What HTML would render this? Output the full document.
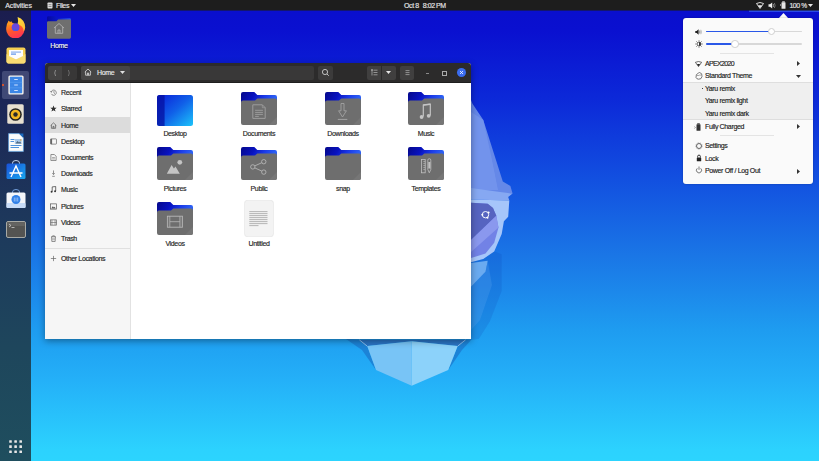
<!DOCTYPE html>
<html><head><meta charset="utf-8">
<style>
*{margin:0;padding:0;box-sizing:border-box}
html,body{width:819px;height:461px;overflow:hidden}
body{position:relative;font-family:"Liberation Sans",sans-serif;font-size:7px;letter-spacing:-0.35px;-webkit-text-stroke:0.15px currentColor;
background:linear-gradient(180deg,#0a0ecc 0%,#0a10d0 6.5%,#0c28d8 21%,#1250e0 39%,#1a76e6 55.5%,#1e9cf0 71.6%,#24b0f8 82.4%,#2cd2fe 97.6%,#2cd4fe 100%)}
.abs{position:absolute}
#wall{position:absolute;left:0;top:0}
#topbar{position:absolute;left:0;top:0;width:819px;height:10px;background:#1d1d1d;color:#e6e6e6}
#topbar span{position:absolute;top:0;line-height:11px;white-space:nowrap}
#dock{position:absolute;left:0;top:10px;width:31px;height:451px;background:linear-gradient(180deg,#1b1d4f 0%,#1c2656 20%,#1d3a5c 50%,#1e465c 75%,#1f4e5e 100%)}
.win{position:absolute;left:45px;top:63px;width:426px;height:276px;background:#fff;box-shadow:0 2px 7px rgba(0,0,0,.38);border-radius:3px 3px 0 0;overflow:hidden}
.hdr{position:absolute;left:0;top:0;width:426px;height:20px;background:#2c2b2b;border-bottom:1px solid #1e1e1e}
.btn{position:absolute;background:#3c3b3b;border-radius:2px}
.side{position:absolute;left:0;top:20px;width:86px;height:256px;background:#f6f6f6;border-right:1px solid #e2e2e2}
.si{position:absolute;left:0;width:85px;height:16px;color:#222}
.si span{position:absolute;left:16px;top:1.3px;line-height:16px}
.si svg{position:absolute;left:5px;top:4.6px}
.item{position:absolute;width:60px;text-align:center}
.lbl{position:absolute;width:80px;text-align:center;color:#1e1e1e;white-space:nowrap;line-height:9px}
.popup{position:absolute;left:683px;top:18px;width:130px;height:166px;background:#fafafa;border-radius:3px;box-shadow:0 0 2px rgba(0,0,0,.3)}
.pi{position:absolute;left:0;width:130px;color:#222;white-space:nowrap;line-height:10px}
.pi span{position:absolute;left:22px}
</style></head><body>

<!-- wallpaper face -->
<svg id="wall" width="819" height="461" viewBox="0 0 819 461">
  <!-- faint background facets -->
  
  <!-- head right side -->
  <polygon points="471,100 472.5,103.7 483.3,120 502.8,181.6 510.4,186 512.6,193.5 471,193" fill="#6588e8"/>
  <polygon points="471,112 483.3,120 492,160 498,190 471,190" fill="#7898ee" opacity="0.7"/>
  <!-- brow -->
  <polygon points="471,188 500,192 512.6,193.5 508.2,197 509.3,200.6 471,199.5" fill="#86a8f2"/>
  <!-- glasses frame -->
  <polygon points="471,199.5 509.3,200.6 508.2,216.8 503.9,221.2 501.7,234 494.2,251.5 483.3,259 471,262.3" fill="#a6c6fa"/>
  <!-- lens -->
  <polygon points="471,202.7 487.7,203.8 493,208 496.3,215.7 498.5,227.6 494.2,242.8 485.5,253.6 471,258" fill="#7282e6"/>
  <polygon points="471,202.7 487.7,203.8 493,208 496.3,215.7 471,240" fill="#5664c0"/>
  <polygon points="496.3,215.7 498.5,227.6 471,252 471,240" fill="#8a98ee"/>
  <g stroke="#f4f8ff" fill="none" stroke-width="1"><circle cx="485.5" cy="214.7" r="3.2"/></g>
  <circle cx="488.6" cy="212.6" r="1" fill="#fff"/><circle cx="482.3" cy="214.7" r="1" fill="#fff"/><circle cx="487.5" cy="217.8" r="1" fill="#fff"/>
  <!-- lower face -->
  <polygon points="471,262.3 483.3,259 494.2,251.5 501.7,254.3 501.7,291 489.8,321.5 479,338.8 471,340" fill="#0a40b0" opacity="0.16"/>
  <polygon points="471,263 487.7,260.8 485.5,271.7 471,286.8" fill="#6aaaf0"/>
  <polygon points="471,286.8 485.5,271.7 487.7,260.8 492,285 480,320 471,330" fill="#60a8f0" opacity="0.25"/>
  <!-- chin shading -->
  <polygon points="346,339 359.3,339.8 367.2,346.1 376,369.9 362,350" fill="#1c80d4" opacity="0.9"/>
  <polygon points="472,339 465.6,339.8 457.7,346.1 448.2,369.9 462,350" fill="#1c80d4" opacity="0.9"/>
  <polygon points="359.3,339.8 465.6,339.8 457.7,346.1 411.7,341.3 367.2,346.1" fill="#2a74c4"/>
  <path d="M359.3,339.8 L367.2,346.1 M465.6,339.8 L457.7,346.1" stroke="#a8ccf2" stroke-width="0.8"/>
  <polygon points="367.2,346.1 411.7,341.3 411.7,385.8 376,369.9" fill="#78c4f6"/>
  <polygon points="411.7,341.3 457.7,346.1 448.2,369.9 411.7,385.8" fill="#8cd2fa"/>
</svg>

<div id="topbar">
  <span style="left:5.2px;letter-spacing:-0.1px">Activities</span>
  <svg class="abs" style="left:47px;top:2px" width="6" height="7" viewBox="0 0 6 7"><rect x="0.5" y="0.5" width="5" height="6" rx="0.8" fill="#ddd"/><rect x="1.5" y="2.5" width="3" height="0.6" fill="#555"/><rect x="1.5" y="4.3" width="3" height="0.6" fill="#555"/></svg>
  <span style="left:56px">Files</span>
  <svg class="abs" style="left:71px;top:4px" width="5" height="3" viewBox="0 0 5 3"><polygon points="0,0 5,0 2.5,3" fill="#e6e6e6"/></svg>
  <span style="left:404px;letter-spacing:-0.4px">Oct 8</span><span style="left:422.8px;letter-spacing:-0.45px">8:02 PM</span>
  <div class="abs" style="left:749px;top:10px;width:70px;height:2px;background:#2a48e8"></div>
  <!-- wifi -->
  <svg class="abs" style="left:756px;top:2px" width="8" height="7" viewBox="0 0 8 7"><path d="M0.5,1.5 Q4,-0.5 7.5,1.5 L4,6.5 Z" fill="none" stroke="#eee" stroke-width="0.9"/><path d="M2,3.2 L6,3.2 L4,6 Z" fill="#eee"/></svg>
  <!-- volume -->
  <svg class="abs" style="left:768px;top:2px" width="8" height="7" viewBox="0 0 8 7"><path d="M0.5,2.2 H2 L4.2,0.5 V6.5 L2,4.8 H0.5 Z" fill="#eee"/><path d="M5.2,2 Q6,3.5 5.2,5" stroke="#aaa" stroke-width="0.8" fill="none"/><path d="M6.4,1 Q7.8,3.5 6.4,6" stroke="#888" stroke-width="0.8" fill="none"/></svg>
  <!-- battery -->
  <svg class="abs" style="left:780px;top:1px" width="7" height="8" viewBox="0 0 7 8"><rect x="2.2" y="0.3" width="2.6" height="1" fill="#ddd"/><rect x="1.5" y="1.2" width="4" height="6.5" rx="0.5" fill="#e6e6e6"/><rect x="0" y="3" width="1" height="2" fill="#888"/></svg>
  <span style="left:789.5px;letter-spacing:-0.55px">100</span><span style="left:801.2px;letter-spacing:-0.3px;font-size:6.6px">%</span>
  <svg class="abs" style="left:808px;top:4px" width="5" height="3" viewBox="0 0 5 3"><polygon points="0,0 5,0 2.5,3" fill="#e6e6e6"/></svg>
</div>

<div class="win">
 <div class="hdr">
  <div class="btn" style="left:3px;top:3px;width:14px;height:13.5px;border-radius:2px 0 0 2px;background:#444343"></div>
  <div class="btn" style="left:17px;top:3px;width:15px;height:13.5px;border-radius:0 2px 2px 0;background:#383737"></div>
  <svg class="abs" style="left:7px;top:6px" width="6" height="8" viewBox="0 0 6 8"><path d="M3.6,1 Q1.8,4 3.6,7" fill="none" stroke="#9a9a9a" stroke-width="0.8"/></svg>
  <svg class="abs" style="left:21px;top:6px" width="6" height="8" viewBox="0 0 6 8"><path d="M2.4,1 Q4.2,4 2.4,7" fill="none" stroke="#777" stroke-width="0.8"/></svg>
  <div class="btn" style="left:36px;top:3px;width:233px;height:13.5px;background:#393838"></div>
  <div class="btn" style="left:36px;top:3px;width:49px;height:13.5px;background:#464545"></div>
  <svg class="abs" style="left:39px;top:5px" width="8" height="8" viewBox="0 0 8 8"><path d="M0.8,4 L4,1 L7.2,4 M1.6,3.4 V7.2 H6.4 V3.4 M3.4,7.2 V5 H4.6 V7.2" fill="none" stroke="#ddd" stroke-width="0.8"/></svg>
  <span class="abs" style="left:52px;top:3px;line-height:13px;color:#e8e8e8">Home</span>
  <svg class="abs" style="left:75px;top:8px" width="5" height="3" viewBox="0 0 5 3"><polygon points="0,0 5,0 2.5,3" fill="#e0e0e0"/></svg>
  <div class="btn" style="left:273px;top:3px;width:15px;height:13.5px"></div>
  <svg class="abs" style="left:276px;top:5px" width="9" height="9" viewBox="0 0 9 9"><circle cx="4" cy="4" r="2.6" fill="none" stroke="#ccc" stroke-width="0.9"/><path d="M6,6 L7.8,7.8" stroke="#ccc" stroke-width="0.9"/></svg>
  <div class="btn" style="left:322px;top:3px;width:14px;height:13.5px;border-radius:2px 0 0 2px;background:#403f3f"></div>
  <div class="btn" style="left:336.5px;top:3px;width:14.5px;height:13.5px;border-radius:0 2px 2px 0;background:#403f3f"></div>
  <svg class="abs" style="left:325px;top:5px" width="9" height="9" viewBox="0 0 9 9"><path d="M2,1.5 V7.5 M3.5,2.2 H7.5 M3.5,4.5 H7.5 M3.5,6.8 H7.5" stroke="#b8b8b8" stroke-width="0.7"/><rect x="1.3" y="1.3" width="1.4" height="1.4" fill="#bbb"/></svg>
  <svg class="abs" style="left:341px;top:8px" width="5" height="3" viewBox="0 0 5 3"><polygon points="0,0 5,0 2.5,3" fill="#e6e6e6"/></svg>
  <div class="btn" style="left:355px;top:3px;width:14px;height:13.5px;background:#403f3f"></div>
  <svg class="abs" style="left:358px;top:5px" width="9" height="9" viewBox="0 0 9 9"><path d="M2.5,2.6 H6.5 M2.5,4.6 H6.5 M2.5,6.6 H6.5" stroke="#b4b4b4" stroke-width="0.7"/></svg>
  <div class="abs" style="left:381px;top:10px;width:3px;height:1px;background:#8a8a8a"></div>
  <div class="abs" style="left:397px;top:8px;width:4.5px;height:4.5px;border:0.9px solid #aaa"></div>
  <div class="abs" style="left:412px;top:5px;width:9px;height:9px;border-radius:50%;background:#3a6cf0"></div>
  <svg class="abs" style="left:414px;top:7px" width="5" height="5" viewBox="0 0 5 5"><path d="M1,1 L4,4 M4,1 L1,4" stroke="#fff" stroke-width="0.8"/></svg>
 </div>
 <div class="side">
<div class="si" style="top:1px;"><svg width="7" height="7" viewBox="0 0 8 8"><path d="M1.3,3.5 A3,3 0 1 1 1.5,5.5" fill="none" stroke="#666" stroke-width="0.8"/><path d="M0.3,2.5 L1.3,3.8 L2.6,2.8" fill="none" stroke="#666" stroke-width="0.7"/><path d="M4.5,2.3 V4.5 L5.8,5.5" fill="none" stroke="#666" stroke-width="0.7"/></svg><span>Recent</span></div>
<div class="si" style="top:17px;"><svg width="7" height="7" viewBox="0 0 8 8"><polygon points="4,0.6 5,3.1 7.6,3.2 5.6,4.9 6.3,7.4 4,6 1.7,7.4 2.4,4.9 0.4,3.2 3,3.1" fill="#333"/></svg><span>Starred</span></div>
<div class="si" style="top:34px;background:#dcdcdc;"><svg width="7" height="7" viewBox="0 0 8 8"><path d="M0.8,4 L4,1 L7.2,4 M1.6,3.4 V7.2 H6.4 V3.4 M3.4,7.2 V5 H4.6 V7.2" fill="none" stroke="#555" stroke-width="0.8"/></svg><span>Home</span></div>
<div class="si" style="top:50px;"><svg width="7" height="7" viewBox="0 0 8 8"><rect x="0.6" y="1" width="6.8" height="6" rx="0.6" fill="none" stroke="#666" stroke-width="0.8"/><rect x="0.6" y="1" width="1.8" height="6" fill="#666"/></svg><span>Desktop</span></div>
<div class="si" style="top:66px;"><svg width="7" height="7" viewBox="0 0 8 8"><path d="M1,0.6 H5 L7,2.6 V7.4 H1 Z" fill="none" stroke="#666" stroke-width="0.8"/><path d="M2.4,4 H5.6 M2.4,5.6 H5.6" stroke="#666" stroke-width="0.6"/></svg><span>Documents</span></div>
<div class="si" style="top:82px;"><svg width="7" height="7" viewBox="0 0 8 8"><path d="M4,0.5 V5 M2.6,3.6 L4,5.2 L5.4,3.6 M2.5,7.2 H5.5" fill="none" stroke="#666" stroke-width="0.8"/></svg><span>Downloads</span></div>
<div class="si" style="top:98px;"><svg width="7" height="7" viewBox="0 0 8 8"><path d="M2.5,6.5 V1 L6.5,0.6 V5.8" fill="none" stroke="#333" stroke-width="0.8"/><circle cx="1.8" cy="6.5" r="1.1" fill="#333"/><circle cx="5.8" cy="5.9" r="1.1" fill="#333"/></svg><span>Music</span></div>
<div class="si" style="top:115px;"><svg width="7" height="7" viewBox="0 0 8 8"><rect x="0.6" y="1" width="6.8" height="6" fill="none" stroke="#555" stroke-width="0.8"/><path d="M1.4,6.2 L3.2,3.8 L4.4,5 L5.2,4.2 L6.6,6.2Z" fill="#555"/></svg><span>Pictures</span></div>
<div class="si" style="top:131px;"><svg width="7" height="7" viewBox="0 0 8 8"><rect x="0.6" y="1" width="6.8" height="6" fill="none" stroke="#666" stroke-width="0.8"/><path d="M2.2,1 V7 M5.8,1 V7 M0.6,4 H7.4" stroke="#666" stroke-width="0.7"/></svg><span>Videos</span></div>
<div class="si" style="top:147px;"><svg width="7" height="7" viewBox="0 0 8 8"><path d="M1.3,2 H6.7 M3,2 V0.9 H5 V2 M1.8,2 L2.1,7.4 H5.9 L6.2,2" fill="none" stroke="#666" stroke-width="0.8"/><path d="M3.3,3.5 V6 M4.7,3.5 V6" stroke="#666" stroke-width="0.6"/></svg><span>Trash</span></div>
<div class="abs" style="left:0;top:165px;width:85px;height:1px;background:#e0e0e0"></div>
<div class="si" style="top:167px"><svg width="7" height="7" viewBox="0 0 8 8"><path d="M4,1 V7 M1,4 H7" stroke="#666" stroke-width="0.8"/></svg><span>Other Locations</span></div>
 </div>
<!--GRID-->
<svg class="abs" style="left:112px;top:31.5px" width="36" height="31" viewBox="0 0 36 31"><defs><linearGradient id="dg" x1="0" y1="0" x2="1" y2="1"><stop offset="0" stop-color="#0a1ed8"/><stop offset="0.5" stop-color="#1060e8"/><stop offset="1" stop-color="#1cc4fa"/></linearGradient></defs><rect x="0" y="0" width="36" height="31" rx="2.5" fill="url(#dg)"/><path d="M2.5,0 H7.6 V31 H2.5 A2.5,2.5 0 0 1 0,28.5 V2.5 A2.5,2.5 0 0 1 2.5,0 Z" fill="#0610a0" opacity="0.75"/></svg>
<div class="lbl" style="left:90px;top:65.8px">Desktop</div>
<svg class="abs" style="left:196px;top:29px" width="36" height="34" viewBox="0 0 36 34"><defs><linearGradient id="fbdoc" x1="0" y1="0" x2="1" y2="0.2"><stop offset="0" stop-color="#05088a"/><stop offset="0.4" stop-color="#0812c0"/><stop offset="0.7" stop-color="#1a3ae8"/><stop offset="1" stop-color="#2c60f4"/></linearGradient></defs><path d="M0,2 A2,2 0 0 1 2,0 H13.3 L16.3,3 H34 A2,2 0 0 1 36,5 V12 H0 Z" fill="url(#fbdoc)"/><path d="M0,10.6 A2,2 0 0 1 2,8.6 H14 L16.3,6.4 H34 A2,2 0 0 1 36,8.4 V31 A2,2 0 0 1 34,33 H2 A2,2 0 0 1 0,31 Z" fill="#6e6e6e"/><path d="M36,25 V31 A2,2 0 0 1 34,33 H28 Z" fill="#767676"/><path d="M11.8,12.8 H21.3 L24.2,15.7 V26.4 H11.8 Z" fill="none" stroke="#a4a4a4" stroke-width="0.85"/><path d="M21.3,12.8 V15.7 H24.2" fill="none" stroke="#a4a4a4" stroke-width="0.6"/><path d="M14.1,18.3 H21.9 M14.1,20.4 H21.9 M14.1,22.4 H21.9 M14.1,24.4 H17.8" stroke="#a4a4a4" stroke-width="0.8"/></svg>
<div class="lbl" style="left:174px;top:65.8px">Documents</div>
<svg class="abs" style="left:280px;top:29px" width="36" height="34" viewBox="0 0 36 34"><defs><linearGradient id="fbdl" x1="0" y1="0" x2="1" y2="0.2"><stop offset="0" stop-color="#05088a"/><stop offset="0.4" stop-color="#0812c0"/><stop offset="0.7" stop-color="#1a3ae8"/><stop offset="1" stop-color="#2c60f4"/></linearGradient></defs><path d="M0,2 A2,2 0 0 1 2,0 H13.3 L16.3,3 H34 A2,2 0 0 1 36,5 V12 H0 Z" fill="url(#fbdl)"/><path d="M0,10.6 A2,2 0 0 1 2,8.6 H14 L16.3,6.4 H34 A2,2 0 0 1 36,8.4 V31 A2,2 0 0 1 34,33 H2 A2,2 0 0 1 0,31 Z" fill="#6e6e6e"/><path d="M36,25 V31 A2,2 0 0 1 34,33 H28 Z" fill="#767676"/><path d="M16,11.5 H19 V18.8 H21.4 L17.5,25 L13.6,18.8 H16 Z" fill="none" stroke="#a8a8a8" stroke-width="0.8"/><path d="M12.8,27.4 H22.3" stroke="#a8a8a8" stroke-width="0.9"/></svg>
<div class="lbl" style="left:258px;top:65.8px">Downloads</div>
<svg class="abs" style="left:363px;top:29px" width="36" height="34" viewBox="0 0 36 34"><defs><linearGradient id="fbmusic" x1="0" y1="0" x2="1" y2="0.2"><stop offset="0" stop-color="#05088a"/><stop offset="0.4" stop-color="#0812c0"/><stop offset="0.7" stop-color="#1a3ae8"/><stop offset="1" stop-color="#2c60f4"/></linearGradient></defs><path d="M0,2 A2,2 0 0 1 2,0 H13.3 L16.3,3 H34 A2,2 0 0 1 36,5 V12 H0 Z" fill="url(#fbmusic)"/><path d="M0,10.6 A2,2 0 0 1 2,8.6 H14 L16.3,6.4 H34 A2,2 0 0 1 36,8.4 V31 A2,2 0 0 1 34,33 H2 A2,2 0 0 1 0,31 Z" fill="#6e6e6e"/><path d="M36,25 V31 A2,2 0 0 1 34,33 H28 Z" fill="#767676"/><path d="M15.3,24.5 V13 L22.3,12.2 V23.4" fill="none" stroke="#c4c4c4" stroke-width="1.2"/><path d="M15.3,13 L22.3,12.2" stroke="#c4c4c4" stroke-width="1.6"/><circle cx="13.6" cy="25" r="1.9" fill="#c4c4c4"/><circle cx="20.7" cy="23.8" r="1.9" fill="#c4c4c4"/></svg>
<div class="lbl" style="left:341px;top:65.8px">Music</div>
<svg class="abs" style="left:112px;top:84px" width="36" height="34" viewBox="0 0 36 34"><defs><linearGradient id="fbpic" x1="0" y1="0" x2="1" y2="0.2"><stop offset="0" stop-color="#05088a"/><stop offset="0.4" stop-color="#0812c0"/><stop offset="0.7" stop-color="#1a3ae8"/><stop offset="1" stop-color="#2c60f4"/></linearGradient></defs><path d="M0,2 A2,2 0 0 1 2,0 H13.3 L16.3,3 H34 A2,2 0 0 1 36,5 V12 H0 Z" fill="url(#fbpic)"/><path d="M0,10.6 A2,2 0 0 1 2,8.6 H14 L16.3,6.4 H34 A2,2 0 0 1 36,8.4 V31 A2,2 0 0 1 34,33 H2 A2,2 0 0 1 0,31 Z" fill="#6e6e6e"/><path d="M36,25 V31 A2,2 0 0 1 34,33 H28 Z" fill="#767676"/><path d="M9.8,26.8 L14.6,17.9 L16.9,21.5 L18.5,19.6 L22.8,26.8 Z" fill="#c4c4c4"/><circle cx="22.8" cy="15.3" r="2.4" fill="#c4c4c4"/></svg>
<div class="lbl" style="left:90px;top:120.8px">Pictures</div>
<svg class="abs" style="left:196px;top:84px" width="36" height="34" viewBox="0 0 36 34"><defs><linearGradient id="fbpub" x1="0" y1="0" x2="1" y2="0.2"><stop offset="0" stop-color="#05088a"/><stop offset="0.4" stop-color="#0812c0"/><stop offset="0.7" stop-color="#1a3ae8"/><stop offset="1" stop-color="#2c60f4"/></linearGradient></defs><path d="M0,2 A2,2 0 0 1 2,0 H13.3 L16.3,3 H34 A2,2 0 0 1 36,5 V12 H0 Z" fill="url(#fbpub)"/><path d="M0,10.6 A2,2 0 0 1 2,8.6 H14 L16.3,6.4 H34 A2,2 0 0 1 36,8.4 V31 A2,2 0 0 1 34,33 H2 A2,2 0 0 1 0,31 Z" fill="#6e6e6e"/><path d="M36,25 V31 A2,2 0 0 1 34,33 H28 Z" fill="#767676"/><circle cx="11.8" cy="19.9" r="2.2" fill="none" stroke="#bcbcbc" stroke-width="0.8"/><circle cx="22.8" cy="14.7" r="2.2" fill="none" stroke="#bcbcbc" stroke-width="0.8"/><circle cx="22.8" cy="25.1" r="2.2" fill="none" stroke="#bcbcbc" stroke-width="0.8"/><path d="M13.8,18.9 L20.8,15.7 M13.8,20.9 L20.8,24.1" stroke="#bcbcbc" stroke-width="0.8"/></svg>
<div class="lbl" style="left:174px;top:120.8px">Public</div>
<svg class="abs" style="left:280px;top:84px" width="36" height="34" viewBox="0 0 36 34"><defs><linearGradient id="fbnone" x1="0" y1="0" x2="1" y2="0.2"><stop offset="0" stop-color="#05088a"/><stop offset="0.4" stop-color="#0812c0"/><stop offset="0.7" stop-color="#1a3ae8"/><stop offset="1" stop-color="#2c60f4"/></linearGradient></defs><path d="M0,2 A2,2 0 0 1 2,0 H13.3 L16.3,3 H34 A2,2 0 0 1 36,5 V12 H0 Z" fill="url(#fbnone)"/><path d="M0,10.6 A2,2 0 0 1 2,8.6 H14 L16.3,6.4 H34 A2,2 0 0 1 36,8.4 V31 A2,2 0 0 1 34,33 H2 A2,2 0 0 1 0,31 Z" fill="#6e6e6e"/><path d="M36,25 V31 A2,2 0 0 1 34,33 H28 Z" fill="#767676"/></svg>
<div class="lbl" style="left:258px;top:120.8px">snap</div>
<svg class="abs" style="left:363px;top:84px" width="36" height="34" viewBox="0 0 36 34"><defs><linearGradient id="fbtpl" x1="0" y1="0" x2="1" y2="0.2"><stop offset="0" stop-color="#05088a"/><stop offset="0.4" stop-color="#0812c0"/><stop offset="0.7" stop-color="#1a3ae8"/><stop offset="1" stop-color="#2c60f4"/></linearGradient></defs><path d="M0,2 A2,2 0 0 1 2,0 H13.3 L16.3,3 H34 A2,2 0 0 1 36,5 V12 H0 Z" fill="url(#fbtpl)"/><path d="M0,10.6 A2,2 0 0 1 2,8.6 H14 L16.3,6.4 H34 A2,2 0 0 1 36,8.4 V31 A2,2 0 0 1 34,33 H2 A2,2 0 0 1 0,31 Z" fill="#6e6e6e"/><path d="M36,25 V31 A2,2 0 0 1 34,33 H28 Z" fill="#767676"/><rect x="13.4" y="12.4" width="3.8" height="13.4" fill="none" stroke="#c0c0c0" stroke-width="0.8"/><path d="M15.3,14.5 h1.9 M15.3,16.5 h1.9 M15.3,18.5 h1.9 M15.3,20.5 h1.9 M15.3,22.5 h1.9" stroke="#c0c0c0" stroke-width="0.6"/><path d="M19.8,13.2 a1.5,1.5 0 0 1 3,0 V22.5 L21.3,25.8 L19.8,22.5 Z" fill="none" stroke="#c0c0c0" stroke-width="0.8"/><rect x="20.3" y="15" width="2" height="6.5" fill="#c0c0c0"/></svg>
<div class="lbl" style="left:341px;top:120.8px">Templates</div>
<svg class="abs" style="left:112px;top:139px" width="36" height="34" viewBox="0 0 36 34"><defs><linearGradient id="fbvid" x1="0" y1="0" x2="1" y2="0.2"><stop offset="0" stop-color="#05088a"/><stop offset="0.4" stop-color="#0812c0"/><stop offset="0.7" stop-color="#1a3ae8"/><stop offset="1" stop-color="#2c60f4"/></linearGradient></defs><path d="M0,2 A2,2 0 0 1 2,0 H13.3 L16.3,3 H34 A2,2 0 0 1 36,5 V12 H0 Z" fill="url(#fbvid)"/><path d="M0,10.6 A2,2 0 0 1 2,8.6 H14 L16.3,6.4 H34 A2,2 0 0 1 36,8.4 V31 A2,2 0 0 1 34,33 H2 A2,2 0 0 1 0,31 Z" fill="#6e6e6e"/><path d="M36,25 V31 A2,2 0 0 1 34,33 H28 Z" fill="#767676"/><rect x="10.4" y="14.2" width="15" height="11" fill="none" stroke="#b8b8b8" stroke-width="0.9"/><path d="M12.8,14.2 V25.2 M22.9,14.2 V25.2 M12.8,19.7 H22.9" stroke="#b8b8b8" stroke-width="0.8"/><path d="M10.4,16 h2.4 M10.4,18 h2.4 M10.4,20 h2.4 M10.4,22 h2.4 M10.4,24 h2.4 M22.9,16 h2.5 M22.9,18 h2.5 M22.9,20 h2.5 M22.9,22 h2.5 M22.9,24 h2.5" stroke="#9a9a9a" stroke-width="0.5"/></svg>
<div class="lbl" style="left:90px;top:175.8px">Videos</div>
<svg class="abs" style="left:199px;top:137px" width="30" height="37" viewBox="0 0 30 37"><rect x="0.4" y="0.1" width="29.2" height="36.8" rx="3.5" fill="#f3f3f3" stroke="#e2e2e2" stroke-width="0.6"/><g stroke="#a4a4a4" stroke-width="0.8"><path d="M5.3,11.6 H23.5 M5.3,13.6 H23.5 M5.3,15.6 H23.5 M5.3,17.6 H23.5 M5.3,19.6 H23.5 M5.3,21.6 H23.5 M5.3,23.6 H23.5"/><path d="M5.3,25.6 H14.5"/></g></svg>
<div class="lbl" style="left:174px;top:176px">Untitled</div>
<!--/GRID-->
</div>

<svg class="abs" style="left:778px;top:12px" width="11" height="7" viewBox="0 0 11 7"><polygon points="0.5,6.5 5.5,1 10.5,6.5" fill="#fafafa"/></svg>
<div class="popup">
  <!-- volume icon -->
  <svg class="abs" style="left:12px;top:10.5px" width="7" height="6" viewBox="0 0 7 6"><path d="M0.3,1.9 H1.6 L3.6,0.3 V5.7 L1.6,4.1 H0.3 Z" fill="#222"/><path d="M4.6,1.6 Q5.2,3 4.6,4.4" stroke="#555" stroke-width="0.7" fill="none"/><path d="M5.8,0.8 Q6.8,3 5.8,5.2" stroke="#888" stroke-width="0.6" fill="none"/></svg>
  <div class="abs" style="left:23px;top:12.7px;width:96px;height:1.8px;background:#d8d8d8;border-radius:1px"></div>
  <div class="abs" style="left:23px;top:12.7px;width:66px;height:1.8px;background:#2a58e8;border-radius:1px"></div>
  <div class="abs" style="left:84.5px;top:9.8px;width:7.5px;height:7.5px;border-radius:50%;background:#fff;border:0.8px solid #cfcfcf"></div>
  <!-- brightness icon -->
  <svg class="abs" style="left:12px;top:21.5px" width="8" height="8" viewBox="0 0 8 8"><circle cx="4" cy="4" r="2" fill="none" stroke="#333" stroke-width="0.8"/><path d="M4,2 A2,2 0 0 1 4,6 Z" fill="#333"/><path d="M4,0.2 V1.2 M4,6.8 V7.8 M0.2,4 H1.2 M6.8,4 H7.8 M1.3,1.3 L2,2 M6,6 L6.7,6.7 M1.3,6.7 L2,6 M6,2 L6.7,1.3" stroke="#333" stroke-width="0.6"/></svg>
  <div class="abs" style="left:23px;top:24.9px;width:96px;height:1.8px;background:#d8d8d8;border-radius:1px"></div>
  <div class="abs" style="left:23px;top:24.9px;width:29px;height:1.8px;background:#2a58e8;border-radius:1px"></div>
  <div class="abs" style="left:48px;top:22px;width:7.5px;height:7.5px;border-radius:50%;background:#fff;border:0.8px solid #cfcfcf"></div>
  <div class="abs" style="left:37px;top:35px;width:54px;height:1px;background:#e4e4e4"></div>
  <!-- APEX -->
  <svg class="abs" style="left:12px;top:42.5px" width="7" height="6" viewBox="0 0 7 6"><path d="M0.4,1.3 Q3.5,-0.3 6.6,1.3 L3.5,5.6 Z" fill="none" stroke="#333" stroke-width="0.7"/><path d="M1.9,3 H5.1 L3.5,5.3 Z" fill="#222"/></svg>
  <div class="pi" style="top:41px"><span style="letter-spacing:-0.65px">APEX2020</span></div>
  <svg class="abs" style="left:114px;top:43px" width="3" height="5" viewBox="0 0 3 5"><polygon points="0,0 3,2.5 0,5" fill="#333"/></svg>
  <!-- Standard theme -->
  <svg class="abs" style="left:11.5px;top:53.5px" width="8" height="8" viewBox="0 0 8 8"><path d="M1,5.5 Q0.5,2 3.5,1 L4.5,0.5 Q7.5,1 7,4.5 Q6.5,7.5 3.5,7.2 Q1.5,7 1,5.5 Z" fill="none" stroke="#444" stroke-width="0.7"/><circle cx="3" cy="3.5" r="0.6" fill="#444"/><circle cx="5" cy="3" r="0.6" fill="#444"/></svg>
  <div class="pi" style="top:53.4px"><span>Standard Theme</span></div>
  <svg class="abs" style="left:113px;top:56.5px" width="5" height="3" viewBox="0 0 5 3"><polygon points="0,0 5,0 2.5,3" fill="#333"/></svg>
  <!-- submenu -->
  <div class="abs" style="left:0;top:64px;width:130px;height:38px;background:#efefef;border-top:0.8px solid #dedede;border-bottom:0.8px solid #dedede"></div>
  <div class="abs" style="left:18.5px;top:69.8px;width:1.6px;height:1.6px;background:#444"></div>
  <div class="pi" style="top:65.5px"><span>Yaru remix</span></div>
  <div class="pi" style="top:78px"><span>Yaru remix light</span></div>
  <div class="pi" style="top:91px"><span>Yaru remix dark</span></div>
  <!-- battery -->
  <svg class="abs" style="left:11px;top:104.5px" width="8" height="8" viewBox="0 0 8 8"><rect x="3.2" y="0.3" width="2.6" height="1" fill="#333"/><rect x="2.5" y="1.2" width="4" height="6.5" rx="0.5" fill="#333"/><path d="M0.3,3.5 L1.5,4.5 L0.3,5.5" stroke="#555" stroke-width="0.5" fill="none"/></svg>
  <div class="pi" style="top:104px"><span>Fully Charged</span></div>
  <svg class="abs" style="left:114px;top:106px" width="3" height="5" viewBox="0 0 3 5"><polygon points="0,0 3,2.5 0,5" fill="#333"/></svg>
  <div class="abs" style="left:37px;top:117px;width:54px;height:1px;background:#e4e4e4"></div>
  <!-- settings -->
  <svg class="abs" style="left:11.5px;top:124px" width="8" height="8" viewBox="0 0 8 8"><circle cx="4" cy="4" r="2.5" fill="none" stroke="#555" stroke-width="0.9"/><circle cx="4" cy="4" r="3.3" fill="none" stroke="#777" stroke-width="0.5" stroke-dasharray="0.9 0.9"/></svg>
  <div class="pi" style="top:123.3px"><span>Settings</span></div>
  <!-- lock -->
  <svg class="abs" style="left:11.5px;top:136px" width="8" height="8" viewBox="0 0 8 8"><path d="M2.6,3.5 V2.5 A1.4,1.4 0 0 1 5.4,2.5 V3.5" fill="none" stroke="#222" stroke-width="0.9"/><rect x="1.8" y="3.5" width="4.4" height="3.8" rx="0.4" fill="#222"/></svg>
  <div class="pi" style="top:135.8px"><span>Lock</span></div>
  <!-- power -->
  <svg class="abs" style="left:11.5px;top:148px" width="8" height="8" viewBox="0 0 8 8"><path d="M2.3,2.3 A2.6,2.6 0 1 0 5.7,2.3" fill="none" stroke="#444" stroke-width="0.7"/><path d="M4,0.5 V3.8" stroke="#444" stroke-width="0.7"/></svg>
  <div class="pi" style="top:148.4px"><span>Power Off / Log Out</span></div>
  <svg class="abs" style="left:114px;top:150.5px" width="3" height="5" viewBox="0 0 3 5"><polygon points="0,0 3,2.5 0,5" fill="#333"/></svg>
</div>

<div id="dock">
  <!-- firefox -->
  <svg class="abs" style="left:5px;top:6px" width="21" height="22" viewBox="0 0 21 22">
    <defs>
      <linearGradient id="ffo" x1="0.2" y1="0.1" x2="0.6" y2="1"><stop offset="0" stop-color="#ff9a1a"/><stop offset="0.45" stop-color="#ff5a2a"/><stop offset="1" stop-color="#ff3058"/></linearGradient>
      <linearGradient id="ffy" x1="0" y1="0" x2="1" y2="1"><stop offset="0" stop-color="#ffe040"/><stop offset="1" stop-color="#ffb830"/></linearGradient>
    </defs>
    <path d="M3.5,5 Q1,8.5 1.2,12.5 A9,9 0 0 0 19.5,14 Q20,9 18,6 L12,9 Z" fill="url(#ffo)"/>
    <path d="M3.2,4.2 L4.6,6.5 L6.5,5.2 L7.5,7.5 L4,9 Z" fill="#ff9a28"/>
    <path d="M12.6,1 Q20,3.5 20.2,11.5 Q19.8,14 18.6,15.5 Q18.5,9.5 12.5,8.6 Q13.6,4.5 12.6,1 Z" fill="url(#ffy)"/>
    <path d="M5.5,9 Q8,7 11,8.5 L9,10 Z" fill="#ffb028"/>
    <circle cx="10.6" cy="11.2" r="3.9" fill="#6a48dc"/>
    <path d="M7,11.5 A3.9,3.9 0 0 0 14.2,12.8 Q11,14 8.5,12.5 Z" fill="#4a5ae0"/>
  </svg>
  <!-- mail -->
  <svg class="abs" style="left:5.5px;top:37px" width="20" height="17" viewBox="0 0 20 17">
    <rect x="0.5" y="0.5" width="19" height="16" rx="2" fill="#f6cf52"/>
    <path d="M0.5,7 L10,13 L19.5,7 V14.5 a2,2 0 0 1 -2,2 h-15 a2,2 0 0 1 -2,-2 Z" fill="#f9dc72"/>
    <path d="M3,3 H17 V9 L10,12.5 L3,9 Z" fill="#fdfdfd"/>
    <rect x="5" y="4.5" width="10" height="1.2" fill="#8ab0f0"/><rect x="5" y="6.5" width="5" height="1.2" fill="#5a90e8"/>
  </svg>
  <!-- active highlight -->
  <div class="abs" style="left:2px;top:61px;width:27px;height:27.5px;background:rgba(120,128,168,0.4);border-radius:2px"></div>
  <div class="abs" style="left:2.2px;top:74.3px;width:1.6px;height:1.6px;border-radius:50%;background:#f05420"></div>
  <!-- files -->
  <svg class="abs" style="left:7.5px;top:65px" width="16" height="20" viewBox="0 0 16 20">
    <rect x="0.4" y="0.4" width="15.2" height="19.2" rx="1.5" fill="#f6f3ee"/>
    <rect x="1.8" y="1.8" width="12.4" height="16.4" rx="0.6" fill="#3c86e6"/>
    <path d="M1.8,7.3 H14.2 M1.8,12.8 H14.2" stroke="#5aa0f0" stroke-width="0.6"/>
    <rect x="6.2" y="4" width="3.6" height="1" fill="#cfe2ff"/><rect x="6.2" y="9.5" width="3.6" height="1" fill="#cfe2ff"/><rect x="6.2" y="15" width="3.6" height="1" fill="#cfe2ff"/>
  </svg>
  <!-- rhythmbox -->
  <svg class="abs" style="left:7px;top:93.5px" width="17" height="20" viewBox="0 0 17 20">
    <rect x="0.3" y="0.3" width="16.4" height="19.4" rx="1.5" fill="#e8e0d0"/>
    <circle cx="8.5" cy="10.5" r="6.3" fill="#222"/>
    <circle cx="8.5" cy="10.5" r="4.8" fill="#f4b820"/>
    <circle cx="8.5" cy="10.5" r="2.2" fill="#2a2a2a"/>
  </svg>
  <!-- writer -->
  <svg class="abs" style="left:8px;top:123px" width="16" height="19" viewBox="0 0 16 19">
    <path d="M0.6,0.6 H11.2 L15.4,4.8 V18.4 H0.6 Z" fill="#fbfbfb" stroke="#5aa0e0" stroke-width="0.7"/>
    <path d="M11.2,0.6 L15.4,4.8 V0.6 Z" fill="#1a6ac0"/>
    <path d="M2.5,6.5 H6.5 M2.5,8.5 H6 M2.5,12.5 H13.5 M2.5,14.5 H11" stroke="#3a86d8" stroke-width="0.9"/>
    <rect x="6.8" y="6" width="6.8" height="4.8" fill="#a8c8ea"/><path d="M7.5,10.5 L9.5,8 L11,9.5 L12,8.5 L13.5,10.5 Z" fill="#506880"/><circle cx="12.8" cy="7" r="0.7" fill="#f0a020"/>
  </svg>
  <!-- app store -->
  <svg class="abs" style="left:5.5px;top:150px" width="20" height="20" viewBox="0 0 20 20">
    <defs><linearGradient id="asg" x1="0" y1="0" x2="1" y2="1"><stop offset="0" stop-color="#1a50d8"/><stop offset="1" stop-color="#18a8f0"/></linearGradient></defs>
    <path d="M6.5,4.5 V3 a3.5,2.5 0 0 1 7,0 V4.5" fill="none" stroke="#d8e6fa" stroke-width="0.9"/>
    <rect x="0.5" y="3.5" width="19" height="15.5" rx="1.5" fill="url(#asg)"/>
    <path d="M5,17 L10,6 L15,17 M3.5,13 H16.5" fill="none" stroke="#fff" stroke-width="1.4"/>
  </svg>
  <!-- snap store -->
  <svg class="abs" style="left:5.5px;top:179px" width="20" height="20" viewBox="0 0 20 20">
    <path d="M6.5,4.5 V3 a3.5,2.5 0 0 1 7,0 V4.5" fill="none" stroke="#7aa8e8" stroke-width="0.9"/>
    <rect x="0.5" y="3.5" width="19" height="15.5" rx="1.5" fill="#f4f6fa"/>
    <rect x="0.5" y="14" width="19" height="5" rx="1" fill="#c8dcf8"/>
    <circle cx="10" cy="10.5" r="4.5" fill="#3080e8"/>
    <path d="M8.3,8.5 V12.5 M10,8.5 V12.5 M11.7,8.5 V12.5" stroke="#cfe0ff" stroke-width="0.6"/>
  </svg>
  <!-- terminal -->
  <svg class="abs" style="left:5.5px;top:211px" width="20" height="17" viewBox="0 0 20 17">
    <rect x="0.5" y="0.5" width="19" height="16" rx="1.5" fill="#545452" stroke="#b4b4ae" stroke-width="0.9"/>
    <rect x="1.2" y="1.2" width="17.6" height="3.8" fill="#646462"/>
    <path d="M3,3 L5,4.5 L3,6" fill="none" stroke="#ddd" stroke-width="0.7"/><path d="M5.5,6.5 H8.5" stroke="#ddd" stroke-width="0.7"/>
  </svg>
  <!-- app grid -->
  <svg class="abs" style="left:8.9px;top:429.8px" width="14" height="14" viewBox="0 0 14 14" fill="#e6e6e6"><rect x="0.2" y="0.2" width="2.6" height="2.6" rx="0.5"/><rect x="5.3" y="0.2" width="2.6" height="2.6" rx="0.5"/><rect x="10.4" y="0.2" width="2.6" height="2.6" rx="0.5"/><rect x="0.2" y="5.3" width="2.6" height="2.6" rx="0.5"/><rect x="5.3" y="5.3" width="2.6" height="2.6" rx="0.5"/><rect x="10.4" y="5.3" width="2.6" height="2.6" rx="0.5"/><rect x="0.2" y="10.4" width="2.6" height="2.6" rx="0.5"/><rect x="5.3" y="10.4" width="2.6" height="2.6" rx="0.5"/><rect x="10.4" y="10.4" width="2.6" height="2.6" rx="0.5"/></svg>
</div>
<svg class="abs" style="left:47px;top:16px" width="24" height="23" viewBox="0 0 24 23">
  <defs><linearGradient id="hfb" x1="0" y1="0" x2="1" y2="0"><stop offset="0" stop-color="#0608a0"/><stop offset="0.45" stop-color="#0a18c8"/><stop offset="1" stop-color="#2a5cf0"/></linearGradient></defs>
  <path d="M0,1.4 a1.2,1.2 0 0 1 1.2,-1.2 h7.8 l2,2 h11.8 a1.2,1.2 0 0 1 1.2,1.2 v4 h-24 z" fill="url(#hfb)"/>
  <path d="M0,6.5 a1.2,1.2 0 0 1 1.2,-1.2 h8.2 l1.7,-1.7 h11.7 a1.2,1.2 0 0 1 1.2,1.2 v16.5 a1.4,1.4 0 0 1 -1.4,1.4 h-21.2 a1.4,1.4 0 0 1 -1.4,-1.4 z" fill="#6f6f6f"/>
  <path d="M7,12 L12,7.5 L17,12 M8.3,11 V17.3 H15.7 V11 M11,17.3 V14 H13 V17.3" fill="none" stroke="#b8b8b8" stroke-width="0.8"/>
</svg>
<div class="abs" style="left:39px;top:40.5px;width:40px;text-align:center;color:#f4f4f4;line-height:9px;text-shadow:0 0.5px 1px rgba(0,0,0,.8)">Home</div>


<div class="abs" style="left:0;top:10px;width:819px;height:1px;background:rgba(29,29,29,0.55)"></div>
</body></html>
